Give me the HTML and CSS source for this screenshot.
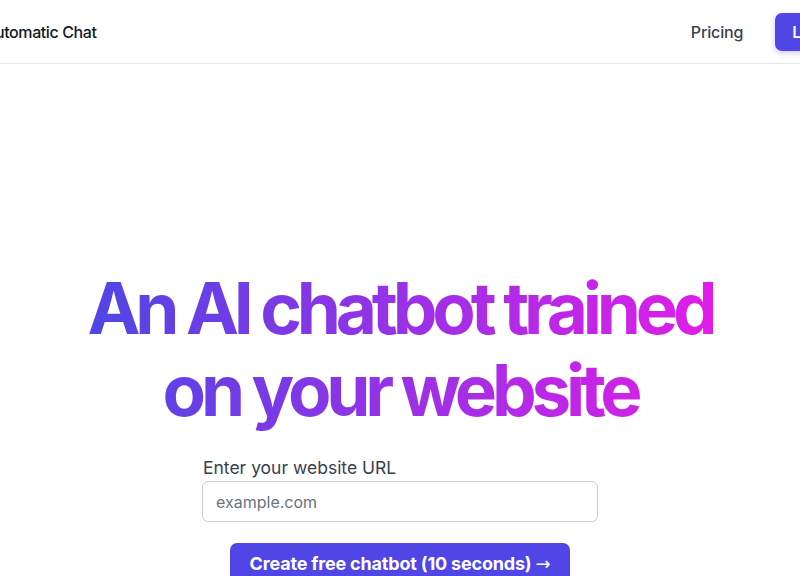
FILE: index.html
```html
<!DOCTYPE html>
<html lang="en">
<head>
<meta charset="utf-8">
<title>Automatic Chat</title>
<link rel="stylesheet" href="styles.css">
</head>
<body>
<header class="topbar">
  <a class="brand" href="#">Automatic Chat</a>
  <nav class="nav">
    <a class="nav-link" href="#">Pricing</a>
    <a class="btn-login" href="#">Login</a>
  </nav>
</header>
<main class="hero">
  <h1 class="headline"><span class="grad">An AI chatbot trained<br>on your website</span></h1>
  <form class="url-form">
    <label class="url-label" for="url">Enter your website URL</label>
    <input class="url-input" id="url" type="text" placeholder="example.com">
    <button class="cta" type="button">Create free chatbot (10 seconds) <span class="arrow">→</span></button>
  </form>
</main>
</body>
</html>
```
FILE: styles.css
```css
* { box-sizing: border-box; }
html, body { margin: 0; padding: 0; }
body {
  width: 800px;
  height: 576px;
  overflow: hidden;
  background: #ffffff;
  font-family: Inter, "Noto Sans", "Liberation Sans", sans-serif;
  color: #111827;
}
.topbar {
  display: flex;
  align-items: center;
  justify-content: space-between;
  height: 64px;
  border-bottom: 1px solid #e5e7eb;
  margin-left: -16px;
  margin-right: -52px;
}
.brand {
  font-size: 16px;
  font-weight: 500;
  color: #111827;
  text-decoration: none;
  letter-spacing: -0.025em;
}
.nav {
  display: flex;
  align-items: center;
  gap: 32px;
}
.nav-link {
  font-size: 16px;
  font-weight: 500;
  color: #374151;
  text-decoration: none;
  letter-spacing: -0.01em;
}
.btn-login {
  display: block;
  background: #4f46e5;
  color: #ffffff;
  font-size: 16px;
  font-weight: 600;
  text-decoration: none;
  padding: 9px 17px;
  line-height: 20px;
  border-radius: 7px;
  box-shadow: 0 2px 6px rgba(79, 70, 229, 0.3);
}
.hero {
  display: flex;
  flex-direction: column;
  align-items: center;
  padding-top: 203px;
}
.headline {
  margin: 0;
  font-size: 71px;
  line-height: 82px;
  font-weight: 700;
  letter-spacing: -0.073em;
  text-align: center;
}
.grad {
  display: inline-block;
  background: linear-gradient(to right, #4f46e5, #e11de8);
  -webkit-background-clip: text;
  background-clip: text;
  color: transparent;
}
.url-form {
  display: flex;
  flex-direction: column;
  align-items: center;
  width: 396px;
  margin-top: 25px;
}
.url-label {
  align-self: stretch;
  font-size: 17.5px;
  line-height: 24px;
  color: #374151;
  font-weight: 400;
  padding-left: 1px;
}
.url-input {
  width: 100%;
  height: 41px;
  margin-top: 1px;
  border: 1px solid #cbcdd1;
  border-radius: 6px;
  padding: 0 13px;
  font-family: inherit;
  font-size: 16px;
  color: #111827;
}
.url-input::placeholder { color: #6b7280; }
.cta {
  margin-top: 21px;
  background: #4f46e5;
  color: #ffffff;
  border: 0;
  border-radius: 7px;
  font-family: inherit;
  font-size: 18px;
  font-weight: 700;
  line-height: 28px;
  padding: 7px 20px 12px;
  letter-spacing: -0.01em;
}
.arrow {
  font-family: "DejaVu Sans", sans-serif;
  font-weight: 400;
}
```
